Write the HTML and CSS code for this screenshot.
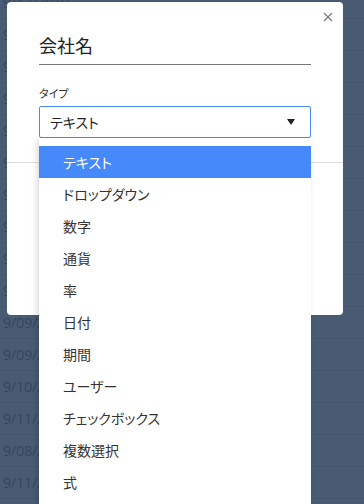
FILE: index.html
```html
<!DOCTYPE html>
<html lang="ja">
<head>
    <meta charset="UTF-8">
    <meta name="viewport" content="width=device-width, initial-scale=1.0">
    <title>フィールド設定</title>
    <link rel="stylesheet" href="styles.css">
</head>
<body>
    <!-- 背景の一覧 -->
    <div class="list">
        <div class="list_row">9/12/2019</div>
        <div class="list_row">9/09/2019</div>
        <div class="list_row">9/09/2019</div>
        <div class="list_row">9/10/2019</div>
        <div class="list_row">9/11/2019</div>
        <div class="list_row">9/08/2019</div>
        <div class="list_row">9/11/2019</div>
        <div class="list_row">9/09/2019</div>
        <div class="list_row">9/10/2019</div>
        <div class="list_row">9/11/2019</div>
        <div class="list_row">9/09/2019</div>
        <div class="list_row">9/09/2019</div>
        <div class="list_row">9/10/2019</div>
        <div class="list_row">9/11/2019</div>
        <div class="list_row">9/08/2019</div>
        <div class="list_row">9/11/2019</div>
    </div>

    <!-- モーダル -->
    <div class="modal">
        <button class="modal_close" aria-label="閉じる">
            <svg width="10" height="10" viewBox="0 0 10 10">
                <path d="M1 1 L9 9 M9 1 L1 9" stroke="#777" stroke-width="1.2" fill="none"/>
            </svg>
        </button>
        <div class="modal_body">
            <div class="field_name">会社名</div>
            <label class="field_label">タイプ</label>
            <div class="select_box">
                <span>テキスト</span>
                <span class="caret"></span>
            </div>
        </div>
        <div class="modal_footer"></div>
    </div>

    <!-- ドロップダウン -->
    <ul class="dropdown">
        <li class="active">テキスト</li>
        <li>ドロップダウン</li>
        <li>数字</li>
        <li>通貨</li>
        <li>率</li>
        <li>日付</li>
        <li>期間</li>
        <li>ユーザー</li>
        <li>チェックボックス</li>
        <li>複数選択</li>
        <li>式</li>
    </ul>
</body>
</html>
```

FILE: styles.css
```css
* {
    padding: 0px;
    margin: 0px;
    box-sizing: border-box;
}

html,
body {
    height: 100%;
}

body {
    background-color: #485b72;
    font-family: "Noto Sans CJK JP", "Open Sans", sans-serif;
    font-feature-settings: "palt";
    overflow: hidden;
}

/* 背景の一覧 */
.list {
    margin-top: -13px;
}

.list_row {
    height: 32px;
    line-height: 32px;
    padding-left: 3px;
    border-bottom: 1px solid #43556b;
    color: #34465b;
    font-family: "Open Sans", sans-serif;
    font-size: 14px;
}

/* モーダル */
.modal {
    position: absolute;
    left: 7px;
    top: 2px;
    width: 336px;
    height: 313px;
    background-color: #fff;
    border-radius: 4px;
}

.modal_close {
    position: absolute;
    right: 8px;
    top: 8px;
    width: 14px;
    height: 14px;
    border: none;
    background: none;
    display: flex;
    align-items: center;
    justify-content: center;
}

.modal_body {
    padding: 29px 32px 0 32px;
}

.field_name {
    font-size: 18px;
    line-height: 28px;
    color: #222;
    padding-bottom: 5px;
    border-bottom: 1px solid #777;
}

.field_label {
    display: block;
    margin-top: 20px;
    font-size: 11px;
    line-height: 16px;
    color: #333;
}

.select_box {
    margin-top: 5px;
    height: 32px;
    border: 1px solid #4a8af4;
    border-radius: 2px;
    padding: 0 15px 0 10px;
    display: flex;
    align-items: center;
    justify-content: space-between;
    font-size: 14px;
    color: #222;
}

.caret {
    width: 0;
    height: 0;
    border-left: 4px solid transparent;
    border-right: 4px solid transparent;
    border-top: 6px solid #222;
}

.modal_footer {
    margin-top: 24px;
    border-top: 1px solid #ddd;
}

/* ドロップダウン */
.dropdown {
    position: absolute;
    left: 39px;
    top: 138px;
    width: 272px;
    bottom: 0;
    padding-top: 8px;
    list-style: none;
    background-color: #fff;
    box-shadow: -2px 2px 6px rgba(0, 0, 0, 0.15);
    overflow: hidden;
}

.dropdown li {
    height: 32px;
    line-height: 32px;
    padding-left: 24px;
    font-size: 14px;
    color: #333;
}

.dropdown li.active {
    background-color: #4589fb;
    color: #fff;
}
```
